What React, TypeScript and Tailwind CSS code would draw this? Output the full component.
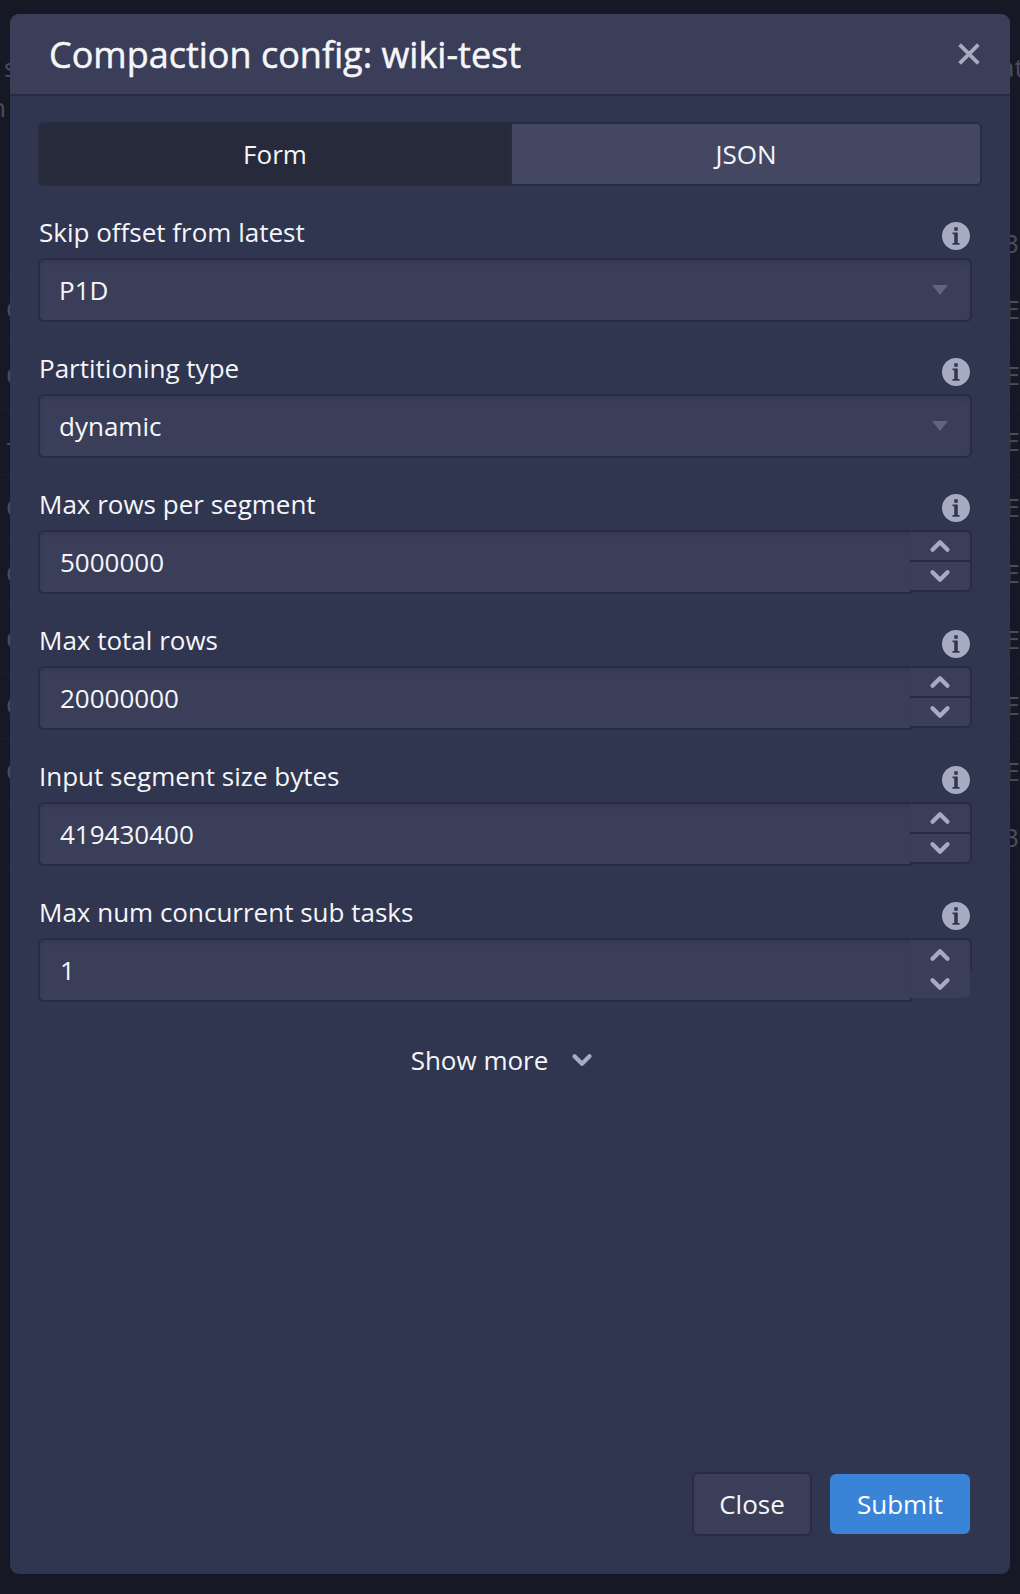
import { ChevronDown, ChevronUp } from "lucide-react";

const FIELDS = [
  { label: "Skip offset from latest", value: "P1D", kind: "select" },
  { label: "Partitioning type", value: "dynamic", kind: "select" },
  { label: "Max rows per segment", value: "5000000", kind: "number" },
  { label: "Max total rows", value: "20000000", kind: "number" },
  { label: "Input segment size bytes", value: "419430400", kind: "number" },
  { label: "Max num concurrent sub tasks", value: "1", kind: "hovered" },
];

const BG_ROWS = [
  { left: "", right: "B", covered: true },
  { left: "C", right: "E", covered: false },
  { left: "C", right: "E", covered: false },
  { left: "-", right: "E", covered: false },
  { left: "C", right: "E", covered: false },
  { left: "C", right: "E", covered: false },
  { left: "C", right: "E", covered: false },
  { left: "C", right: "E", covered: false },
  { left: "C", right: "E", covered: false },
  { left: "", right: "B", covered: true },
];

function InfoIcon() {
  return (
    <svg viewBox="0 0 16 16" className="w-[28px] h-[28px] fill-[#a7abc2]">
      <path d="M8 0C3.58 0 0 3.58 0 8s3.58 8 8 8 8-3.58 8-8-3.58-8-8-8zM7 3h2v2H7V3zm3 10H6v-1h1V7H6V6h3v6h1v1z" fillRule="evenodd" />
    </svg>
  );
}

function NumberField({ value, hovered }: { value: string; hovered: boolean }) {
  return (
    <div className="flex h-[64px]">
      <div className="w-[874px] h-[64px] border-2 border-[#282c40] rounded-l-[6px] bg-[#3a3e58] shadow-[inset_0_4px_4px_-2px_#33374f] pl-[20px] flex items-center">
        {value}
      </div>
      <div className="w-[62px] h-[62px] -ml-[2px] flex flex-col">
        <div className={`h-[32px] flex items-center justify-center bg-[#3a3e58] rounded-tr-[6px] border-t-2 border-r-2 border-[#282c40] ${hovered ? "" : "border-b-2"}`}>
          <ChevronUp className="w-[30px] h-[30px] text-[#a7abc2]" strokeWidth={3.4} />
        </div>
        <div className={`flex items-center justify-center bg-[#3a3e58] rounded-br-[6px] ${hovered ? "h-[28px] mr-[2px]" : "h-[30px] border-b-2 border-r-2 border-[#282c40]"}`}>
          <ChevronDown className="w-[30px] h-[30px] text-[#a7abc2]" strokeWidth={3.4} />
        </div>
      </div>
    </div>
  );
}

function SelectField({ value }: { value: string }) {
  return (
    <div className="h-[64px] border-2 border-[#282c40] rounded-[6px] bg-[#3a3e58] shadow-[inset_0_4px_4px_-2px_#33374f] pl-[19px] pr-[22px] flex items-center justify-between">
      {value}
      <svg viewBox="0 0 16 10" className="w-[16px] h-[10px] fill-[#5f6480]">
        <path d="M0 0h16L8 10z" />
      </svg>
    </div>
  );
}

export default function App() {
  return (
    <div className="relative w-[1020px] h-[1594px] overflow-hidden bg-[#161825] text-[#4a4d5e] text-[26px] font-['Open_Sans',sans-serif]">
      {/* page behind the dialog */}
      <div className="flex justify-between h-[40px] mt-[48px] pl-[4px]">
        <span>s</span>
        <span className="w-[20px] overflow-hidden whitespace-nowrap">at</span>
      </div>
      <div className="h-[40px] -ml-[10px]">n</div>
      <div className="mt-[83px]">
        {BG_ROWS.map((row, i) => (
          <div key={i} className="flex h-[66px] items-center border-b border-[#1a1c29] pl-[6px]">
            <span className={row.covered ? "w-[996px]" : "w-[1004px]"}>{row.left}</span>
            <span>{row.right}</span>
          </div>
        ))}
      </div>

      {/* dialog */}
      <div className="absolute left-[10px] top-[14px] w-[1000px] h-[1560px] flex flex-col rounded-[9px] bg-[#303550] text-[#f5f6fa] overflow-hidden">
        <div className="h-[82px] shrink-0 flex items-center justify-between bg-[#3a3e58] border-b-2 border-[#282c40] pl-[39px] pr-[27px]">
          <h1 className="text-[36px] font-normal [-webkit-text-stroke:0.5px] leading-none pt-[2px]">Compaction config: wiki-test</h1>
          <svg viewBox="0 0 24 24" className="w-[28px] h-[28px] stroke-[#a7abc2] fill-none" strokeWidth={3.2}>
            <path d="M4 4l16 16M20 4L4 20" />
          </svg>
        </div>

        <div className="flex-1 flex flex-col pl-[28px] pr-[38px]">
          <div className="flex w-[944px] h-[64px] mt-[26px] mb-[30px] border-2 border-[#282c40] rounded-[6px] overflow-hidden">
            <div className="w-[470px] flex items-center justify-center bg-[#262a3b]">Form</div>
            <div className="flex-1 flex items-center justify-center bg-[#434762] border-l-2 border-[#282c40]">JSON</div>
          </div>

          <div className="w-[934px]">
            {FIELDS.map((f) => (
              <div key={f.label} className="h-[136px]">
                <div className="h-[36px] mb-[6px] flex items-center justify-between pl-[1px] pr-[2px]">
                  <span className="-mt-[3px]">{f.label}</span>
                  <span className="mt-[4px]"><InfoIcon /></span>
                </div>
                {f.kind === "select" ? (
                  <SelectField value={f.value} />
                ) : (
                  <NumberField value={f.value} hovered={f.kind === "hovered"} />
                )}
              </div>
            ))}
          </div>

          <div className="flex items-center justify-center gap-[19px] h-[56px] pr-[2px] text-[26px]">
            Show more
            <ChevronDown className="w-[30px] h-[30px] text-[#a7abc2]" strokeWidth={3.4} />
          </div>

          <div className="mt-auto mb-[38px] mr-[2px] flex items-center justify-end gap-[18px]">
            <button className="w-[120px] h-[64px] rounded-[6px] border-2 border-[#282c40] bg-[#3a3e58]">Close</button>
            <button className="w-[140px] h-[60px] rounded-[6px] bg-[#3a84d8] text-white">Submit</button>
          </div>
        </div>
      </div>
    </div>
  );
}
